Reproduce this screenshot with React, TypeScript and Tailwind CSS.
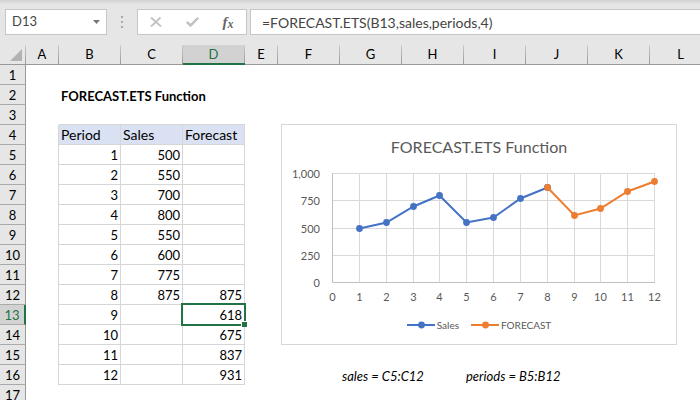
import React from "react";

type CellValue = string | number;

const columns = [
  { name: "A", width: "w-[33px]" },
  { name: "B", width: "w-[62px]" },
  { name: "C", width: "w-[62px]" },
  { name: "D", width: "w-[62px]" },
  { name: "E", width: "w-[33px]" },
  { name: "F", width: "w-[62px]" },
  { name: "G", width: "w-[62px]" },
  { name: "H", width: "w-[62px]" },
  { name: "I", width: "w-[62px]" },
  { name: "J", width: "w-[62px]" },
  { name: "K", width: "w-[62px]" },
  { name: "L", width: "w-[62px]" },
];

const sales = [500, 550, 700, 800, 550, 600, 775, 875];
const forecast = [875, 618, 675, 837, 931];
const forecastStart = 8;

const cells: Record<string, CellValue> = {
  B2: "FORECAST.ETS Function",
  B4: "Period",
  C4: "Sales",
  D4: "Forecast",
  G16: "sales = C5:C12",
  I16: "periods = B5:B12",
};
for (let period = 1; period <= 12; period++) {
  cells[`B${period + 4}`] = period;
}
sales.forEach((value, i) => (cells[`C${i + 5}`] = value));
forecast.forEach((value, i) => (cells[`D${i + 4 + forecastStart}`] = value));

const rows = Array.from({ length: 17 }, (_, i) => i + 1);

function FormulaBar() {
  return (
    <header className="flex h-[45px] items-start gap-[3px] bg-linear-to-b from-[#d2d2d2] to-[#e6e6e6] to-10% pt-[9px] pl-[5px] text-[#444]">
      <div className="flex h-[26px] w-[102px] shrink-0 border border-[#c6c6c6] bg-white">
        <input
          aria-label="Name box"
          defaultValue="D13"
          className="w-0 flex-1 pl-1.5 text-[13px] outline-none"
        />
        <button aria-label="Show names" className="flex w-5 items-center justify-center">
          <svg width="7" height="4" viewBox="0 0 7 4">
            <path d="M0 0h7L3.5 4z" fill="#777" />
          </svg>
        </button>
      </div>
      <div className="flex h-[26px] w-6 shrink-0 flex-col items-center justify-center gap-[3px]">
        <span className="size-0.5 bg-[#aaa]" />
        <span className="size-0.5 bg-[#aaa]" />
        <span className="size-0.5 bg-[#aaa]" />
      </div>
      <div className="flex h-[26px] w-[110px] shrink-0 border border-[#c6c6c6] bg-white">
        <button aria-label="Cancel" className="flex flex-1 items-center justify-center">
          <svg width="12" height="10" viewBox="0 0 12 10" fill="none" stroke="#c3c3c3">
            <path d="M1 .5 11 9.5M10.5 .5 1 9.5" strokeWidth="1.9" />
          </svg>
        </button>
        <button aria-label="Enter" className="flex flex-1 items-center justify-center">
          <svg width="13" height="10" viewBox="0 0 13 10" fill="none" stroke="#c3c3c3">
            <path d="M.8 5 4.6 8.5 12.2 .8" strokeWidth="2.5" />
          </svg>
        </button>
        <button
          aria-label="Insert function"
          className="flex flex-1 items-center justify-center font-['Liberation_Serif',serif] text-[15px] leading-5 font-bold text-[#666] italic"
        >
          f<span className="pt-1 text-[12px] leading-4">x</span>
        </button>
      </div>
      <input
        aria-label="Formula"
        defaultValue="=FORECAST.ETS(B13,sales,periods,4)"
        className="h-[26px] min-w-0 flex-1 border border-r-0 border-[#c6c6c6] bg-white pl-[11px] text-[14px] outline-none"
      />
    </header>
  );
}

function ColumnHeader({ name }: { name: string }) {
  const selected = name === "D";
  return (
    <th
      scope="col"
      className={
        selected
          ? "h-5 border-b-2 border-[#217346] bg-[#d2d2d2] p-0 font-normal text-[#217346]"
          : "h-5 border-b border-[#999] p-0 font-normal"
      }
    >
      <div className="flex h-full items-stretch">
        <span className={selected ? "flex-1 leading-[18px]" : "flex-1 leading-[19px]"}>{name}</span>
        <span className="w-px bg-linear-to-b from-[#ccc] to-[#999]" />
      </div>
    </th>
  );
}

function cellClasses(column: string, row: number, value?: CellValue) {
  const classes = ["h-5 p-0 px-0.5 pt-px whitespace-nowrap leading-[18px] border-[#d6d6d6]"];
  const inTable = "BCD".includes(column);
  if (inTable && row >= 3 && row <= 16) classes.push("border-b");
  if ("ABCD".includes(column) && row >= 4 && row <= 16) classes.push("border-r");
  if (inTable && row === 4) classes.push("bg-[#d9e1f2] text-[14px]");
  if (typeof value === "number") classes.push("text-right");
  if (row === 2) classes.push("font-bold");
  if (row === 16 && typeof value === "string") classes.push("italic");
  if (column === "D" && row === 13) classes.push("relative");
  return classes.join(" ");
}

function Sheet() {
  return (
    <table className="w-full min-w-[712px] table-fixed border-separate border-spacing-0 text-[13px] text-black">
      <colgroup>
        <col className="w-[26px]" />
        {columns.map((c) => (
          <col key={c.name} className={c.name === "L" ? undefined : c.width} />
        ))}
      </colgroup>
      <thead className="bg-[#e6e6e6]">
        <tr>
          <th className="h-5 border-b border-[#999] p-0">
            <div className="flex h-full">
              <span className="flex flex-1 items-center justify-end pr-[3px]">
                <svg width="12" height="12" viewBox="0 0 12 12">
                  <path d="M12 0v12H0z" fill="#b2b2b2" />
                </svg>
              </span>
              <span className="w-px bg-linear-to-b from-[#ccc] to-[#999]" />
            </div>
          </th>
          {columns.map((c) => (
            <ColumnHeader key={c.name} name={c.name} />
          ))}
        </tr>
      </thead>
      <tbody>
        {rows.map((row) => (
          <tr key={row}>
            <th
              scope="row"
              className={
                row === 13
                  ? "h-5 border-r-2 border-b border-r-[#217346] border-b-[#aaa] bg-[#d2d2d2] p-0 pt-px leading-[18px] font-normal text-[#217346]"
                  : "h-5 border-r border-b border-r-[#999] border-b-[#aaa] bg-[#e6e6e6] p-0 pt-px leading-[18px] font-normal"
              }
            >
              {row}
            </th>
            {columns.map((c) => {
              const value = cells[`${c.name}${row}`];
              return (
                <td key={c.name} className={cellClasses(c.name, row, value)}>
                  {value}
                  {c.name === "D" && row === 13 && (
                    <span className="absolute -top-0.5 -right-0.5 -bottom-0.5 -left-0.5 border-2 border-[#217346]">
                      <span className="absolute -right-[3px] -bottom-[3px] size-1.5 border-t border-l border-white bg-[#217346]" />
                    </span>
                  )}
                </td>
              );
            })}
          </tr>
        ))}
      </tbody>
    </table>
  );
}

const plot = { left: 51, right: 373, top: 49, bottom: 158 };
const xAt = (period: number) =>
  Math.round(plot.left + ((plot.right - plot.left) * period) / 12) + 0.5;
const yAt = (value: number) =>
  Math.round(plot.bottom - ((plot.bottom - plot.top) * value) / 1000) + 0.5;

function Series({ values, start, color }: { values: number[]; start: number; color: string }) {
  const points = values.map((v, i) => [xAt(start + i), yAt(v)]);
  return (
    <g fill={color}>
      <polyline points={points.map((p) => p.join(",")).join(" ")} fill="none" stroke={color} strokeWidth="2" />
      {points.map(([x, y]) => (
        <circle key={x} cx={x} cy={y} r="3.4" />
      ))}
    </g>
  );
}

function LegendItem({ color, label }: { color: string; label: string }) {
  return (
    <span className="flex items-center gap-0.5">
      <svg width="28" height="8" viewBox="0 0 28 8">
        <path d="M0 4h28" stroke={color} strokeWidth="2" />
        <circle cx="14.5" cy="4" r="3.4" fill={color} />
      </svg>
      {label}
    </span>
  );
}

function Chart() {
  return (
    <figure className="absolute top-[79px] left-[281px] h-[221px] w-[396px] border border-[#d6d6d6] bg-white text-[#595959]">
      <figcaption className="absolute inset-x-0 top-2.5 text-center text-[16px] leading-6">
        FORECAST.ETS Function
      </figcaption>
      <svg
        className="absolute -top-px -left-px text-[11px]"
        width="396"
        height="221"
        viewBox="0 0 396 221"
        fill="#595959"
        role="img"
        aria-label="Sales and forecast by period"
      >
        <g stroke="#d9d9d9">
          {[250, 500, 750, 1000].map((v) => (
            <path key={v} d={`M${plot.left} ${yAt(v)}H${plot.right + 1}`} />
          ))}
          {Array.from({ length: 12 }, (_, i) => (
            <path key={i} d={`M${xAt(i + 1)} ${plot.top}V${plot.bottom}`} />
          ))}
        </g>
        <path
          d={`M${xAt(0)} ${plot.top}V${yAt(0)}H${plot.right + 1}`}
          fill="none"
          stroke="#bfbfbf"
        />
        {["0", "250", "500", "750", "1,000"].map((label, i) => (
          <text key={label} x="39" y={yAt(i * 250) + 4} textAnchor="end">
            {label}
          </text>
        ))}
        {Array.from({ length: 13 }, (_, i) => (
          <text key={i} x={xAt(i)} y="177" textAnchor="middle">
            {i}
          </text>
        ))}
        <Series values={sales} start={1} color="#4472c4" />
        <Series values={forecast} start={forecastStart} color="#ed7d31" />
      </svg>
      <div className="absolute inset-x-0 top-48 flex justify-center gap-3 text-[10px] leading-4">
        <LegendItem color="#4472c4" label="Sales" />
        <LegendItem color="#ed7d31" label="FORECAST" />
      </div>
    </figure>
  );
}

export default function App() {
  return (
    <div className="h-screen overflow-hidden bg-white font-[Lato,sans-serif]">
      <FormulaBar />
      <main className="relative">
        <Sheet />
        <Chart />
      </main>
    </div>
  );
}
